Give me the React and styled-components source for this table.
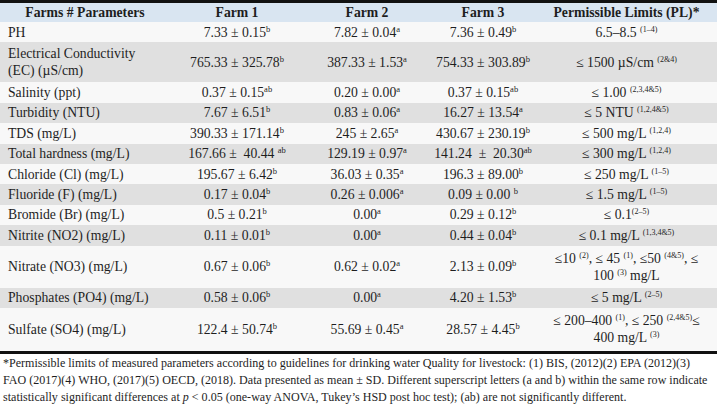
import React from 'react'
import styled, { createGlobalStyle } from 'styled-components'

const GlobalStyle = createGlobalStyle`
  html, body {
    margin: 0;
    padding: 0;
    background: #ffffff;
  }
  body {
    font-family: 'Liberation Serif', 'Times New Roman', serif;
    color: #1e1e1e;
  }
`

const Page = styled.div`
  width: 717px;
  height: 404px;
  overflow: hidden;
`
const Table = styled.div`
  border-top: 3px solid #111;
  border-bottom: 3px solid #111;
`
const Row = styled.div`
  display: grid;
  grid-template-columns: 170px 134px 126px 106px 1fr;
  height: ${props => props.$height}px;
  background: ${props => (props.$head ? '#d9e5f1' : props.$shade ? '#e0e0e0' : '#f8f8f8')};
  font-size: 13.7px;
  line-height: 17px;
  font-weight: ${props => (props.$head ? 700 : 400)};
`
const Cell = styled.div`
  display: flex;
  align-items: center;
  justify-content: ${props => (props.$left ? 'flex-start' : 'center')};
  padding: 0 ${props => (props.$left ? '8px' : '4px')};
`
const Content = styled.span`
  display: block;
  text-align: ${props => (props.$left ? 'left' : 'center')};
  white-space: nowrap;
`
const Sup = styled.sup`
  font-size: ${props => (props.$ref ? '8px' : '8.5px')};
  line-height: 0;
  vertical-align: 5px;
`
const Note = styled.div`
  padding: 1px 0 0 3px;
  font-size: 12.05px;
  line-height: 17px;
  color: #1e1e1e;
`
const NoteLine = styled.div`
  white-space: nowrap;
`

const sig = (value, letter) => (
  <>
    {value}
    <Sup>{letter}</Sup>
  </>
)
const lim = (value, ref) => (
  <>
    {value}
    <Sup $ref>{ref}</Sup>
  </>
)

const rows = [
  {
    name: 'PH',
    f1: sig('7.33 ± 0.15', 'b'),
    f2: sig('7.82 ± 0.04', 'a'),
    f3: sig('7.36 ± 0.49', 'b'),
    pl: lim('6.5–8.5 ', '(1–4)'),
  },
  {
    name: (
      <>
        Electrical Conductivity
        <br />
        (EC) (µS/cm)
      </>
    ),
    tall: 40,
    f1: sig('765.33 ± 325.78', 'b'),
    f2: sig('387.33 ± 1.53', 'a'),
    f3: sig('754.33 ± 303.89', 'b'),
    pl: lim('≤ 1500 µS/cm ', '(2&4)'),
  },
  {
    name: 'Salinity (ppt)',
    f1: sig('0.37 ± 0.15', 'ab'),
    f2: sig('0.20 ± 0.00', 'a'),
    f3: sig('0.37 ± 0.15', 'ab'),
    pl: lim('≤ 1.00 ', '(2,3,4&5)'),
  },
  {
    name: 'Turbidity (NTU)',
    f1: sig('7.67 ± 6.51', 'b'),
    f2: sig('0.83 ± 0.06', 'a'),
    f3: sig('16.27 ± 13.54', 'a'),
    pl: lim('≤ 5 NTU ', '(1,2,4&5)'),
  },
  {
    name: 'TDS (mg/L)',
    f1: sig('390.33 ± 171.14', 'b'),
    f2: sig('245 ± 2.65', 'a'),
    f3: sig('430.67 ± 230.19', 'b'),
    pl: lim('≤ 500 mg/L ', '(1,2,4)'),
  },
  {
    name: 'Total hardness (mg/L)',
    f1: sig('167.66 ±\u00a0 40.44 ', 'ab'),
    f2: sig('129.19 ± 0.97', 'a'),
    f3: sig('141.24 \u00a0±\u00a0 20.30', 'ab'),
    pl: lim('≤ 300 mg/L ', '(1,2,4)'),
  },
  {
    name: 'Chloride (Cl) (mg/L)',
    f1: sig('195.67 ± 6.42', 'b'),
    f2: sig('36.03 ± 0.35', 'a'),
    f3: sig('196.3 ± 89.00', 'b'),
    pl: lim('≤ 250 mg/L ', '(1–5)'),
  },
  {
    name: 'Fluoride (F) (mg/L)',
    f1: sig('0.17 ± 0.04', 'b'),
    f2: sig('0.26 ± 0.006', 'a'),
    f3: sig('0.09 ± 0.00 ', 'b'),
    pl: lim('≤ 1.5 mg/L ', '(1–5)'),
  },
  {
    name: 'Bromide (Br) (mg/L)',
    f1: sig('0.5 ± 0.21', 'b'),
    f2: sig('0.00', 'a'),
    f3: sig('0.29 ± 0.12', 'b'),
    pl: lim('≤ 0.1', '(2–5)'),
  },
  {
    name: 'Nitrite (NO2) (mg/L)',
    f1: sig('0.11 ± 0.01', 'b'),
    f2: sig('0.00', 'a'),
    f3: sig('0.44 ± 0.04', 'b'),
    pl: lim('≤ 0.1 mg/L ', '(1,3,4&5)'),
  },
  {
    name: 'Nitrate (NO3) (mg/L)',
    tall: 42,
    f1: sig('0.67 ± 0.06', 'b'),
    f2: sig('0.62 ± 0.02', 'a'),
    f3: sig('2.13 ± 0.09', 'b'),
    pl: (
      <>
        ≤10 <Sup $ref>(2)</Sup>, ≤ 45 <Sup $ref>(1)</Sup>, ≤50 <Sup $ref>(4&5)</Sup>, ≤
        <br />
        100 <Sup $ref>(3)</Sup> mg/L
      </>
    ),
  },
  {
    name: 'Phosphates (PO4) (mg/L)',
    f1: sig('0.58 ± 0.06', 'b'),
    f2: sig('0.00', 'a'),
    f3: sig('4.20 ± 1.53', 'b'),
    pl: lim('≤ 5 mg/L ', '(2–5)'),
  },
  {
    name: 'Sulfate (SO4) (mg/L)',
    tall: 43,
    f1: sig('122.4 ± 50.74', 'b'),
    f2: sig('55.69 ± 0.45', 'a'),
    f3: sig('28.57 ± 4.45', 'b'),
    pl: (
      <>
        ≤ 200–400 <Sup $ref>(1)</Sup>, ≤ 250 <Sup $ref>(2,4&5)</Sup>≤
        <br />
        400 mg/L <Sup $ref>(3)</Sup>
      </>
    ),
  },
]

export default function App() {
  return (
    <Page>
      <GlobalStyle />
      <Table>
        <Row $head $height={19}>
          <Cell><Content>Farms # Parameters</Content></Cell>
          <Cell><Content>Farm 1</Content></Cell>
          <Cell><Content>Farm 2</Content></Cell>
          <Cell><Content>Farm 3</Content></Cell>
          <Cell><Content>Permissible Limits (PL)*</Content></Cell>
        </Row>
        {rows.map((row, i) => (
          <Row key={i} $shade={i % 2 === 1} $height={row.tall || 20.4}>
            <Cell $left><Content $left>{row.name}</Content></Cell>
            <Cell><Content>{row.f1}</Content></Cell>
            <Cell><Content>{row.f2}</Content></Cell>
            <Cell><Content>{row.f3}</Content></Cell>
            <Cell><Content>{row.pl}</Content></Cell>
          </Row>
        ))}
      </Table>
      <Note>
        <NoteLine>
          *Permissible limits of measured parameters according to guidelines for drinking water
          Quality for livestock: (1) BIS, (2012)(2) EPA (2012)(3)
        </NoteLine>
        <NoteLine>
          FAO (2017)(4) WHO, (2017)(5) OECD, (2018). Data presented as mean ± SD. Different
          superscript letters (a and b) within the same row indicate
        </NoteLine>
        <NoteLine>
          statistically significant differences at <i>p</i> &lt; 0.05 (one-way ANOVA, Tukey’s HSD
          post hoc test); (ab) are not significantly different.
        </NoteLine>
      </Note>
    </Page>
  )
}
